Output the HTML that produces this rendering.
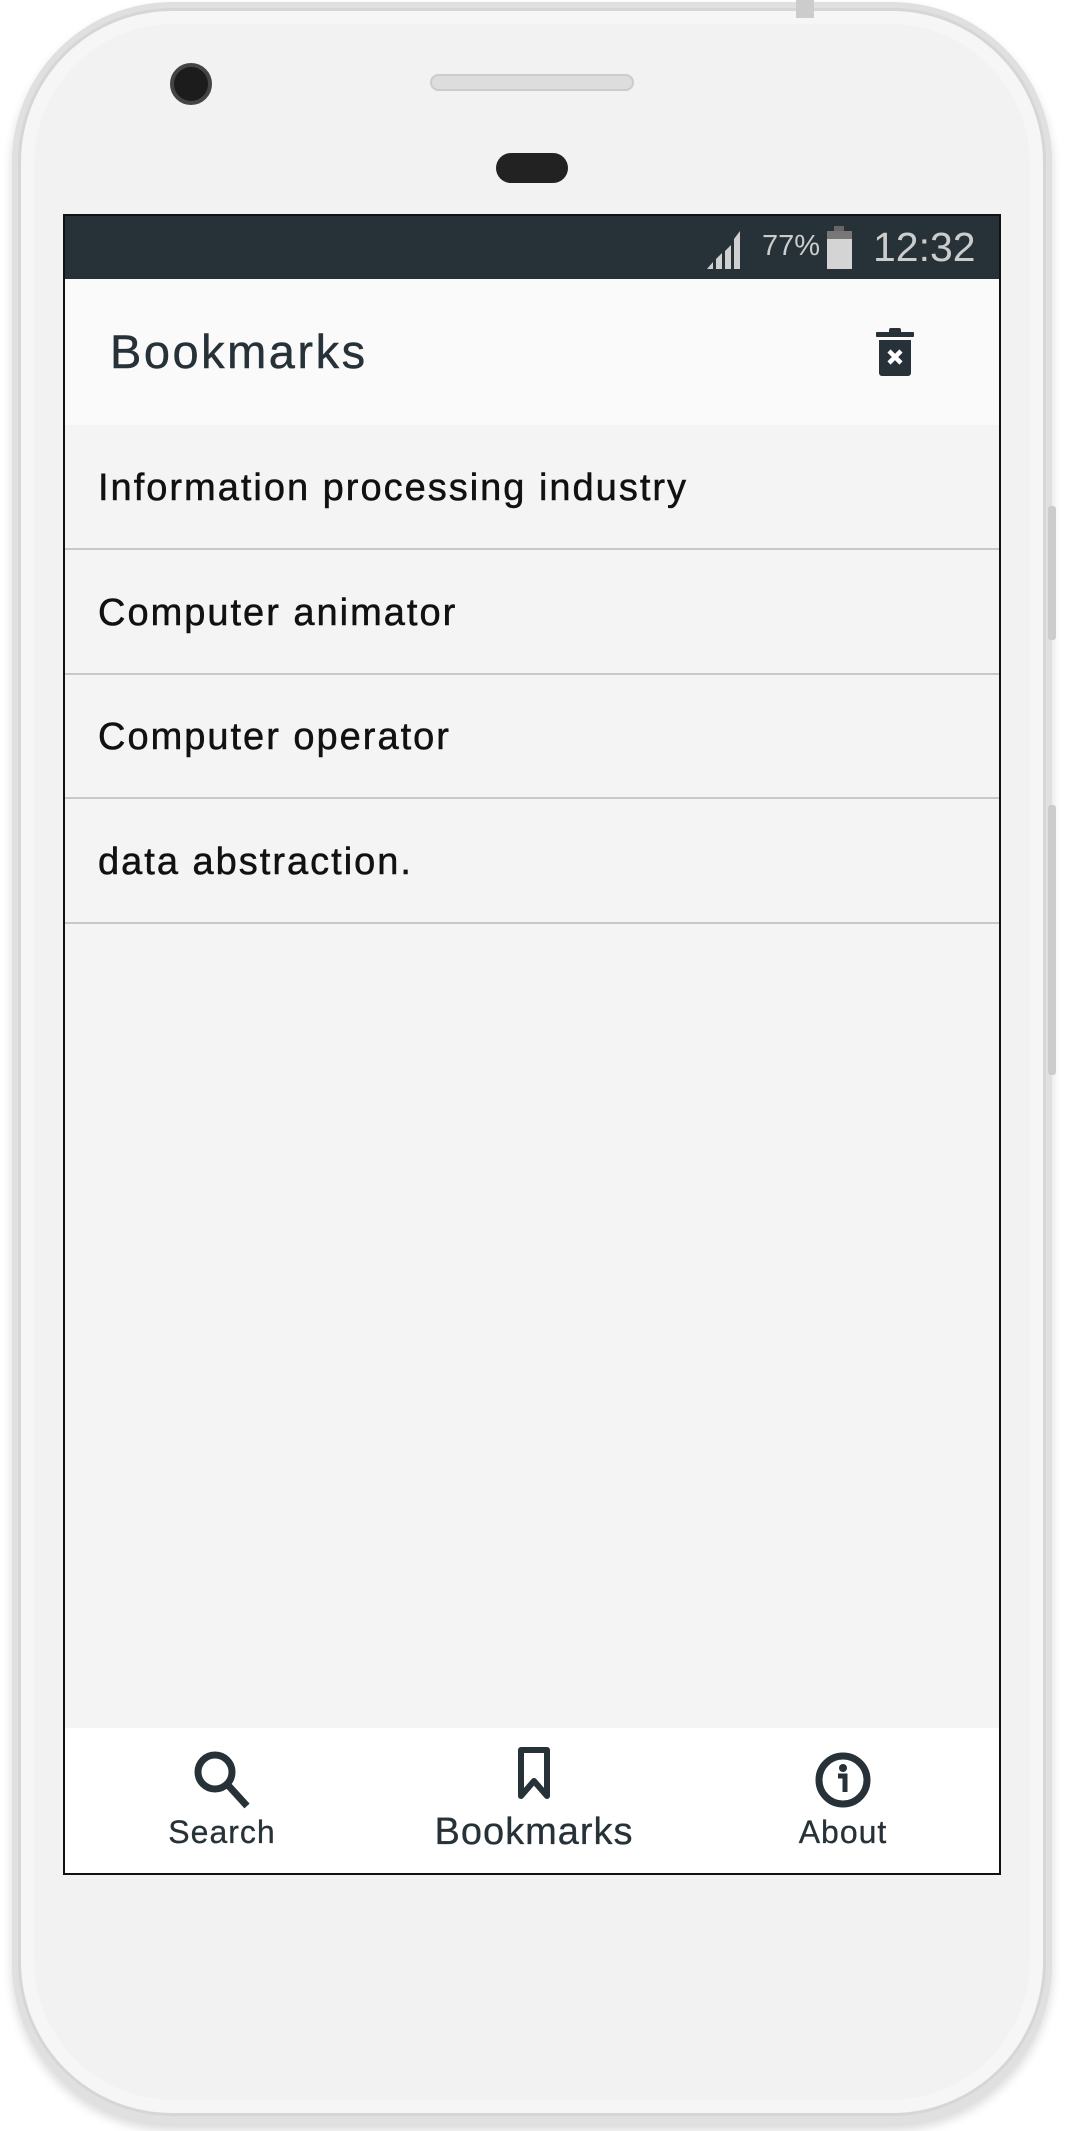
<!DOCTYPE html>
<html><head><meta charset="utf-8"><style>
*{margin:0;padding:0;box-sizing:border-box}
body{width:1069px;height:2131px;background:#fff;position:relative;overflow:hidden;font-family:"Liberation Sans",sans-serif}
.abs{position:absolute}
.phone{left:12px;top:2px;width:1040px;height:2122px;border-radius:160px;background:#e0e0e0;box-shadow:0 6px 10px rgba(0,0,0,.15)}
.phone2{left:18px;top:8px;width:1028px;height:2108px;border-radius:154px;background:#f6f6f6;border:3px solid #d6d6d6}
.phone3{left:34px;top:24px;width:996px;height:2076px;border-radius:140px;background:#f2f2f2}
.screen{left:63px;top:214px;width:938px;height:1661px;border:2px solid #111;background:#f4f4f4;overflow:hidden}
.status{left:0;top:0;width:100%;height:63px;background:#263238}
.header{left:0;top:63px;width:100%;height:146px;background:#fafafa}
.title{left:45px;font-size:47px;color:#263238;letter-spacing:2.5px;-webkit-text-stroke:0.4px #263238}
.item{left:0;width:100%;height:125px;border-bottom:2px solid #c8c8c8}
.item span{position:absolute;left:33px;top:42px;font-size:38px;letter-spacing:2px;color:#111;-webkit-text-stroke:0.5px #111}
.nav{left:0;top:1512px;width:100%;height:147px;background:#fff}
.lab{font-size:33px;color:#263238;text-align:center;width:260px;-webkit-text-stroke:0.3px #263238}
</style></head><body>
<div class="abs phone"></div>
<div class="abs phone2"></div>
<div class="abs phone3"></div>
<div class="abs" style="left:796px;top:0;width:18px;height:18px;background:#ccc"></div>
<div class="abs" style="left:1048px;top:506px;width:8px;height:134px;background:#ccc;border-radius:3px"></div>
<div class="abs" style="left:1048px;top:805px;width:8px;height:270px;background:#ccc;border-radius:3px"></div>
<div class="abs" style="left:170px;top:63px;width:42px;height:42px;border-radius:50%;background:#1c1c1c;border:4px solid #444"></div>
<div class="abs" style="left:430px;top:74px;width:204px;height:17px;border-radius:9px;background:#ddd;border:2px solid #ccc"></div>
<div class="abs" style="left:496px;top:153px;width:72px;height:30px;border-radius:15px;background:#222"></div>
<div class="abs screen">
 <div class="abs status">
  <svg class="abs" style="left:642px;top:12px" width="42" height="42" viewBox="0 0 42 42"><path d="M0 41h6v-7zM9 41h6V25l-6 6zM18 41h6V17l-6 6zM27 41h6V3l-6 8z" fill="#d0d0d0"/></svg>
  <div class="abs" style="left:697px;top:14px;font-size:29px;color:#ccc">77%</div>
  <svg class="abs" style="left:761px;top:10px" width="28" height="44"><rect x="8" y="0" width="10" height="6" fill="#666"/><rect x="1" y="5" width="25" height="8" fill="#777"/><rect x="1" y="13" width="25" height="30" fill="#d4d4d4"/></svg>
  <div class="abs" style="left:808px;top:8px;font-size:41px;color:#ccc">12:32</div>
 </div>
 <div class="abs header">
  <div class="abs title" style="top:45px">Bookmarks</div>
  <svg class="abs" style="left:811px;top:49px" width="38" height="48" viewBox="0 0 38 48"><rect x="0" y="4" width="38" height="5" rx="1" fill="#263238"/><rect x="13" y="0" width="12" height="6" rx="2" fill="#263238"/><path d="M3 12h32v33a3 3 0 0 1-3 3H6a3 3 0 0 1-3-3z" fill="#263238"/><path d="M13 23l12 12M25 23L13 35" stroke="#fff" stroke-width="4.5"/></svg>
 </div>
 <div class="abs item" style="top:209px"><span>Information processing industry</span></div>
 <div class="abs item" style="top:334px"><span>Computer animator</span></div>
 <div class="abs item" style="top:458px"><span>Computer operator</span></div>
 <div class="abs item" style="top:583px"><span>data abstraction.</span></div>
 <div class="abs nav">
  <svg class="abs" style="left:126px;top:20px" width="64" height="64" viewBox="0 0 64 64"><circle cx="24" cy="24" r="17" fill="none" stroke="#263238" stroke-width="7"/><path d="M36 36l20 22" stroke="#263238" stroke-width="7"/></svg>
  <div class="abs lab" style="left:27px;top:86px;font-size:32px;letter-spacing:1px">Search</div>
  <svg class="abs" style="left:450px;top:18px" width="40" height="54" viewBox="0 0 40 54"><path d="M6 4h26v46l-13-15-13 15z" fill="none" stroke="#263238" stroke-width="6" stroke-linejoin="round"/></svg>
  <div class="abs lab" style="left:339px;top:83px;font-size:38px;letter-spacing:1px">Bookmarks</div>
  <svg class="abs" style="left:748px;top:22px" width="60" height="60" viewBox="0 0 60 60"><circle cx="30" cy="30" r="24" fill="none" stroke="#263238" stroke-width="7"/><circle cx="30" cy="18" r="4" fill="#263238"/><path d="M25 26h7v16" fill="none" stroke="#263238" stroke-width="5"/></svg>
  <div class="abs lab" style="left:648px;top:86px;font-size:32px;letter-spacing:1px">About</div>
 </div>
</div>
</body></html>
